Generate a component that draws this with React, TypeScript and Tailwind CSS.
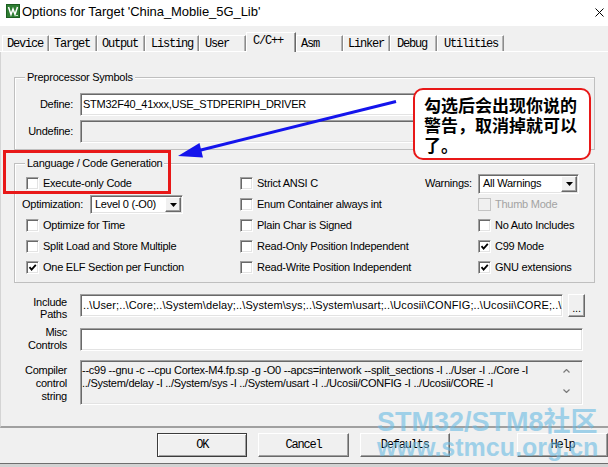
import React from "react";

const sunken =
  "border border-t-[#a0a0a0] border-l-[#a0a0a0] border-r-white border-b-white shadow-[inset_1px_1px_0_#696969,inset_-1px_-1px_0_#e3e3e3]";
const raised =
  "border border-t-white border-l-white border-r-[#696969] border-b-[#696969] shadow-[inset_-1px_-1px_0_#a0a0a0]";
const mono = "font-['Liberation_Mono','Courier_New',monospace] text-[12px] tracking-[-1.2px]";

function KeilIcon() {
  return (
    <svg width="14" height="14" viewBox="0 0 14 14" className="shrink-0">
      <rect x="0" y="0" width="14" height="14" fill="#2e7d32" />
      <rect x="0.5" y="0.5" width="13" height="13" fill="none" stroke="#1b5e20" />
      <path d="M2.5 3 L5 10.5 L7 5 L9 10.5 L11.5 3" stroke="#fff" strokeWidth="1.5" fill="none" />
      <path d="M9.5 11.5 h2.5" stroke="#cde8cf" strokeWidth="1" />
    </svg>
  );
}

function Check({ checked, disabled }: { checked?: boolean; disabled?: boolean }) {
  return (
    <span
      className={`w-[13px] h-[13px] shrink-0 flex items-center justify-center ${
        disabled ? "bg-[#f0f0f0] border border-[#c4c4c4]" : `bg-white ${sunken}`
      }`}
    >
      {checked && (
        <svg width="9" height="9" viewBox="0 0 9 9">
          <path d="M1.5 4.2 L3.6 6.6 L7.8 1.8" stroke="#000" strokeWidth="1.8" fill="none" />
        </svg>
      )}
    </span>
  );
}

function CheckRow({ label, checked, disabled }: { label: string; checked?: boolean; disabled?: boolean }) {
  return (
    <div className="h-[21px] flex items-center gap-[4px] whitespace-nowrap">
      <Check checked={checked} disabled={disabled} />
      <span className={disabled ? "text-[#a3a3a3]" : ""}>{label}</span>
    </div>
  );
}

function DropArrow() {
  return (
    <svg width="7" height="4" viewBox="0 0 7 4">
      <path d="M0 0 H7 L3.5 4 Z" fill="#000" />
    </svg>
  );
}

function Select({ value, className }: { value: string; className: string }) {
  return (
    <div className={`${sunken} bg-white flex items-stretch p-[1px] ${className}`}>
      <span className="flex-1 pl-[3px] flex items-center whitespace-nowrap overflow-hidden">{value}</span>
      <span className={`w-[16px] ${raised} bg-[#f0f0f0] flex items-center justify-center`}>
        <DropArrow />
      </span>
    </div>
  );
}

function Legend({ children }: { children: React.ReactNode }) {
  return (
    <span className="absolute left-[10px] top-[-8px] px-[2px] bg-[#f0f0f0] leading-[14px] whitespace-nowrap">
      {children}
    </span>
  );
}

const tabs: { label: string; w: string; pl: string; active?: boolean }[] = [
  { label: "Device", w: "w-[47px]", pl: "pl-[4px]" },
  { label: "Target", w: "w-[48px]", pl: "pl-[4px]" },
  { label: "Output", w: "w-[48px]", pl: "pl-[4px]" },
  { label: "Listing", w: "w-[54px]", pl: "pl-[5px]" },
  { label: "User", w: "w-[47px]", pl: "pl-[5px]" },
  { label: "C/C++", w: "w-[50px]", pl: "pl-[6px]", active: true },
  { label: "Asm", w: "w-[47px]", pl: "pl-[4px]" },
  { label: "Linker", w: "w-[47px]", pl: "pl-[4px]" },
  { label: "Debug", w: "w-[47px]", pl: "pl-[6px]" },
  { label: "Utilities", w: "w-[67px]", pl: "pl-[6px]" },
];

const includePaths =
  "..\\User;..\\Core;..\\System\\delay;..\\System\\sys;..\\System\\usart;..\\Ucosii\\CONFIG;..\\Ucosii\\CORE;..\\U";

export default function App() {
  return (
    <div className="relative w-[608px] h-[467px] overflow-hidden bg-[#f0f0f0] text-black font-['Liberation_Sans',Arial,sans-serif] text-[11px] tracking-[-0.25px]">
      {/* title bar */}
      <div className="h-[26px] bg-white flex items-start pt-[4px] pl-[6px]">
        <KeilIcon />
        <span className="ml-[2px] text-[13px] leading-[16px] tracking-[-0.05px] whitespace-nowrap">
          Options for Target 'China_Moblie_5G_Lib'
        </span>
        <svg width="9" height="9" viewBox="0 0 9 9" className="ml-auto mr-[4px] mt-[4px]">
          <path d="M0.5 0.5 L8.5 8.5 M8.5 0.5 L0.5 8.5" stroke="#000" strokeWidth="1" />
        </svg>
      </div>

      {/* tab strip */}
      <div className={`h-[26px] flex items-end pl-[2px] border-b border-b-white ${mono}`}>
        {tabs.map((t) =>
          t.active ? (
            <div
              key={t.label}
              className={`${t.w} ${t.pl} h-[20px] mb-[-1px] relative z-10 bg-[#f0f0f0] border-t border-l border-t-white border-l-white border-r border-r-[#696969] shadow-[inset_-1px_0_0_#a0a0a0] leading-[14px] pt-[1px] whitespace-nowrap`}
            >
              {t.label}
            </div>
          ) : (
            <div
              key={t.label}
              className={`${t.w} ${t.pl} h-[16px] border-t border-l border-t-white border-l-white border-r border-r-[#8c8c8c] shadow-[inset_-1px_0_0_#b4b4b4] flex items-center leading-[14px] whitespace-nowrap`}
            >
              {t.label}
            </div>
          )
        )}
      </div>

      {/* C/C++ page */}
      <div className="h-[376px] border-l border-l-[#d4d4d4] border-b-2 border-b-[#a0a0a0] pt-[25px]">
        {/* Preprocessor Symbols */}
        <div className="relative ml-[13px] w-[581px] h-[73px] border border-[#bfbfbf] shadow-[inset_1px_1px_0_#fff] pt-[15px] flex flex-col gap-[4px]">
          <Legend>Preprocessor Symbols</Legend>
          <div className="flex items-center">
            <span className="w-[58px] text-right">Define:</span>
            <div className={`ml-[7px] w-[502px] h-[23px] bg-white ${sunken} pl-[2px] flex items-center whitespace-nowrap overflow-hidden`}>
              STM32F40_41xxx,USE_STDPERIPH_DRIVER
            </div>
          </div>
          <div className="flex items-center">
            <span className="w-[58px] text-right">Undefine:</span>
            <div className={`ml-[7px] w-[502px] h-[23px] bg-[#f0f0f0] ${sunken}`} />
          </div>
        </div>

        {/* Language / Code Generation */}
        <div className="relative ml-[13px] mt-[13px] w-[581px] h-[120px] border border-[#bfbfbf] shadow-[inset_1px_1px_0_#fff] pt-[9px] flex">
          <Legend>Language / Code Generation</Legend>
          <div className="w-[225px] pl-[11px] flex flex-col">
            <CheckRow label="Execute-only Code" />
            <div className="h-[21px] flex items-center -ml-[4px] whitespace-nowrap">
              <span className="w-[68px]">Optimization:</span>
              <Select value="Level 0 (-O0)" className="w-[93px] h-[19px]" />
            </div>
            <CheckRow label="Optimize for Time" />
            <CheckRow label="Split Load and Store Multiple" />
            <CheckRow label="One ELF Section per Function" checked />
          </div>
          <div className="w-[185px] flex flex-col">
            <CheckRow label="Strict ANSI C" />
            <CheckRow label="Enum Container always int" />
            <CheckRow label="Plain Char is Signed" />
            <CheckRow label="Read-Only Position Independent" />
            <CheckRow label="Read-Write Position Independent" />
          </div>
          <div className="flex-1 flex flex-col">
            <div className="h-[21px] flex items-center whitespace-nowrap">
              <span className="w-[53px]">Warnings:</span>
              <Select value="All Warnings" className="w-[101px] h-[20px]" />
            </div>
            <div className="pl-[53px] flex flex-col">
              <CheckRow label="Thumb Mode" disabled />
              <CheckRow label="No Auto Includes" />
              <CheckRow label="C99 Mode" checked />
              <CheckRow label="GNU extensions" checked />
            </div>
          </div>
        </div>

        {/* Include Paths */}
        <div className="mt-[11px] flex items-start">
          <div className="w-[66px] text-right leading-[12px] pt-[2px]">
            Include
            <br />
            Paths
          </div>
          <div className={`ml-[13px] w-[483px] h-[23px] bg-white ${sunken} pl-[2px] flex items-center whitespace-nowrap overflow-hidden tracking-[0.1px]`}>
            {includePaths}
          </div>
          <div className={`ml-[5px] w-[17px] h-[23px] ${raised} bg-[#f0f0f0] flex items-end justify-center pb-[4px] leading-[8px]`}>
            ...
          </div>
        </div>

        {/* Misc Controls */}
        <div className="mt-[8px] flex items-start">
          <div className="w-[66px] text-right leading-[13px] -mt-[2px]">
            Misc
            <br />
            Controls
          </div>
          <div className={`ml-[13px] w-[503px] h-[23px] bg-white ${sunken}`} />
        </div>

        {/* Compiler control string */}
        <div className="mt-[8px] flex items-start">
          <div className="w-[66px] text-right leading-[13px] pt-[4px]">
            Compiler
            <br />
            control
            <br />
            string
          </div>
          <div className={`ml-[13px] w-[503px] h-[45px] bg-[#f0f0f0] ${sunken} flex`}>
            <div className="flex-1 pl-[1px] pt-[3px] leading-[13px] whitespace-pre overflow-hidden">
              {"--c99 --gnu -c --cpu Cortex-M4.fp.sp -g -O0 --apcs=interwork --split_sections -I ../User -I ../Core -I\n../System/delay -I ../System/sys -I ../System/usart -I ../Ucosii/CONFIG -I ../Ucosii/CORE -I"}
            </div>
            <div className="w-[10px] mr-[11px] pt-[8px] flex flex-col items-center">
              <svg width="7" height="4" viewBox="0 0 7 4">
                <path d="M0.5 3.5 L3.5 0.5 L6.5 3.5" stroke="#7a7a7a" strokeWidth="1.2" fill="none" />
              </svg>
              <svg width="7" height="4" viewBox="0 0 7 4" className="mt-[16px]">
                <path d="M0.5 0.5 L3.5 3.5 L6.5 0.5" stroke="#7a7a7a" strokeWidth="1.2" fill="none" />
              </svg>
            </div>
          </div>
        </div>
      </div>

      {/* dialog buttons */}
      <div className={`h-[35px] pt-[5px] pl-[157px] flex items-start gap-[11px] ${mono}`}>
        <div className="w-[91px] h-[24px] border border-[#3c3c3c] bg-[#f0f0f0] shadow-[inset_1px_1px_0_#fff,inset_-1px_-1px_0_#a0a0a0] flex items-center justify-center">
          OK
        </div>
        <div className={`w-[91px] h-[24px] ${raised} bg-[#f0f0f0] flex items-center justify-center`}>Cancel</div>
        <div className={`w-[91px] h-[24px] ${raised} bg-[#f0f0f0] flex items-center justify-center`}>Defaults</div>
        <div className={`ml-[56px] w-[91px] h-[24px] shrink-0 ${raised} bg-[#f0f0f0] flex items-center justify-center`}>
          Help
        </div>
      </div>
      <div className="h-[4px] border-t border-t-[#6e6e6e] bg-[#d2d2d2]" />

      {/* annotation: arrow */}
      <svg className="absolute left-0 top-0 pointer-events-none" width="608" height="467" viewBox="0 0 608 467">
        <line x1="396" y1="101.5" x2="199" y2="150.5" stroke="#1414ec" strokeWidth="3" />
        <polygon points="178,156 203,157.5 199.5,143" fill="#1414ec" />
      </svg>

      {/* annotation: highlight frame */}
      <div className="absolute left-[3px] top-[150px] w-[168px] h-[44px] border-[3px] border-[#e81818] pointer-events-none" />

      {/* annotation: callout */}
      <div className="absolute left-[413px] top-[88px] w-[178px] h-[72px] bg-white border-2 border-[#e81818] rounded-[10px] pl-[9px] pt-[5px] font-['Noto_Sans_CJK_SC',sans-serif] font-bold text-[17px] leading-[20px] tracking-[0px]">
        勾选后会出现你说的
        <br />
        警告，取消掉就可以
        <br />
        了。
      </div>

      {/* site watermark */}
      <div className="absolute left-[377px] top-[409px] text-[#6bbce4] opacity-60 font-['Liberation_Sans','Noto_Sans_CJK_SC',sans-serif] font-bold tracking-[0px] whitespace-nowrap pointer-events-none">
        <div className="text-[27px] leading-[26px]">STM32/STM8社区</div>
        <div className="text-[25px] leading-[25px]">www.stmcu.org.cn</div>
      </div>
    </div>
  );
}
